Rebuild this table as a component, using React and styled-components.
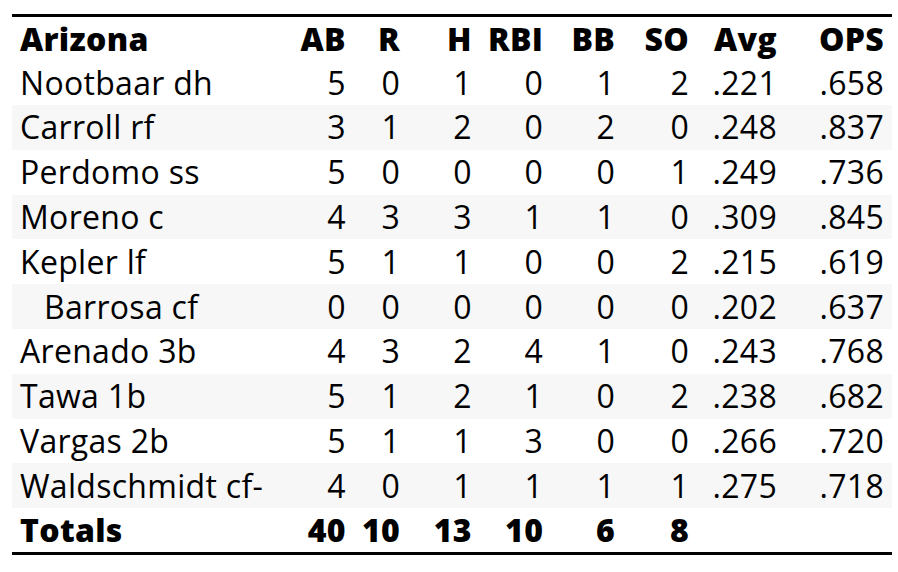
import styled, { createGlobalStyle } from "styled-components";

const GlobalStyle = createGlobalStyle`
  body {
    margin: 0;
    background: #fff;
    font-family: "Open Sans", Lato, sans-serif;
    color: #000;
  }
`;

const Wrapper = styled.div`
  padding: 14px 6px 0 12px;
`;

const Table = styled.table`
  width: 880px;
  border-collapse: collapse;
  border-top: 3px solid #000;
  border-bottom: 3px solid #000;
  font-size: 32px;
  letter-spacing: 0.3px;
`;

const Col = styled.col`
  width: ${(p) => p.$w}px;
`;

const Row = styled.tr`
  height: 44.8px;
  background: ${(p) => (p.$striped ? "#f7f7f7" : "transparent")};
  font-weight: ${(p) => (p.$bold ? 800 : 400)};
`;

const Cell = styled.td`
  padding: 0 8px 0 ${(p) => (p.$indent ? 32 : 8)}px;
  text-align: ${(p) => (p.$left ? "left" : "right")};
  white-space: nowrap;
  line-height: 1;
  vertical-align: middle;
`;

const HeadCell = styled(Cell).attrs({ as: "th" })`
  font-weight: 800;
`;

const columns = ["AB", "R", "H", "RBI", "BB", "SO", "Avg", "OPS"];
const widths = [272, 70, 54, 72, 71, 72, 74, 88, 107];

const players = [
  ["Nootbaar dh", 5, 0, 1, 0, 1, 2, ".221", ".658"],
  ["Carroll rf", 3, 1, 2, 0, 2, 0, ".248", ".837"],
  ["Perdomo ss", 5, 0, 0, 0, 0, 1, ".249", ".736"],
  ["Moreno c", 4, 3, 3, 1, 1, 0, ".309", ".845"],
  ["Kepler lf", 5, 1, 1, 0, 0, 2, ".215", ".619"],
  ["Barrosa cf", 0, 0, 0, 0, 0, 0, ".202", ".637", true],
  ["Arenado 3b", 4, 3, 2, 4, 1, 0, ".243", ".768"],
  ["Tawa 1b", 5, 1, 2, 1, 0, 2, ".238", ".682"],
  ["Vargas 2b", 5, 1, 1, 3, 0, 0, ".266", ".720"],
  ["Waldschmidt cf-", 4, 0, 1, 1, 1, 1, ".275", ".718"],
];

const totals = ["Totals", 40, 10, 13, 10, 6, 8, "", ""];

export default function App() {
  return (
    <Wrapper>
      <GlobalStyle />
      <Table>
        <colgroup>
          {widths.map((w, i) => (
            <Col key={i} $w={w} />
          ))}
        </colgroup>
        <thead>
          <Row>
            <HeadCell $left>Arizona</HeadCell>
            {columns.map((c) => (
              <HeadCell key={c}>{c}</HeadCell>
            ))}
          </Row>
        </thead>
        <tbody>
          {players.map((p, i) => (
            <Row key={p[0]} $striped={i % 2 === 1}>
              <Cell $left $indent={p[9]}>
                {p[0]}
              </Cell>
              {p.slice(1, 9).map((v, j) => (
                <Cell key={j}>{v}</Cell>
              ))}
            </Row>
          ))}
          <Row $bold>
            <Cell $left>{totals[0]}</Cell>
            {totals.slice(1).map((v, j) => (
              <Cell key={j}>{v}</Cell>
            ))}
          </Row>
        </tbody>
      </Table>
    </Wrapper>
  );
}
